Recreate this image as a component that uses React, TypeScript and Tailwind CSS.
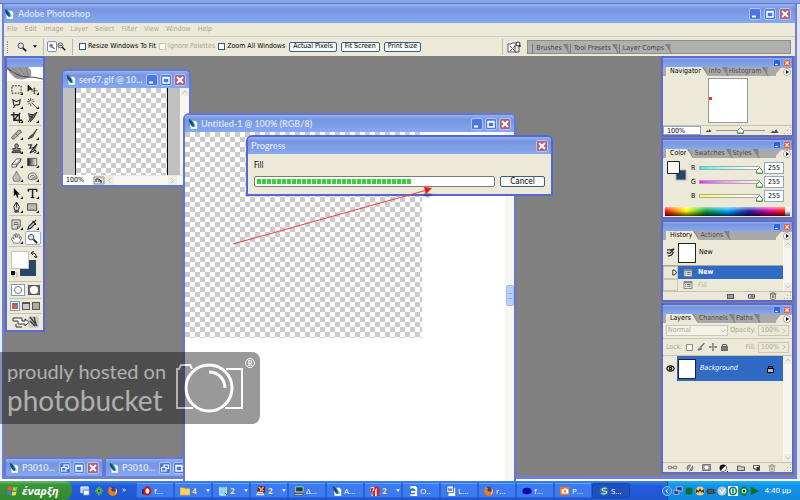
import type { ReactNode } from "react"
import { useState } from "react"
import { ChevronDown, ChevronLeft, ChevronRight, ChevronUp, Eye, Trash2 } from "lucide-react"

const TITLE = "bg-gradient-to-b from-[#93b2f0] via-[#7894de] via-25% to-[#84a9ee]"
const CHECKER = "bg-[repeating-conic-gradient(#ffffff_0_25%,#cbcbcb_0_50%)] bg-[length:10px_10px]"

type WinButtonKind = "min" | "max" | "restore" | "close"

function WinButton({ kind, small, bright }: { kind: WinButtonKind; small?: boolean; bright?: boolean }) {
  const size = small ? "h-2 w-2" : "h-3 w-3"
  const color = kind === "close" ? (bright ? "bg-[#ee5a2c]" : "bg-[#b0617c]") : bright ? "bg-[#2c62dc]" : "bg-[#4a76e8]"
  return (
    <button
      aria-label={kind}
      className={`${size} ${color} flex shrink-0 items-center justify-center rounded-xs border ${small ? "border-[#8ea8ea]" : "border-[#b3c6f4]"}`}
    >
      <svg viewBox="0 0 10 10" className="h-full w-full" fill="none" stroke="#fff" strokeWidth="1.5">
        {kind === "min" && <path d="M2 7.5h4" strokeWidth="2" />}
        {kind === "max" && <path d="M2 2.5h6v5.5h-6zM2 3h6" />}
        {kind === "restore" && <path d="M4 4V2h4.500v3.500H6.500M1.500 4.500h4.500v3.500H1.500z" strokeWidth="1.200" />}
        {kind === "close" && <path d="M2 2l6 6M8 2l-6 6" strokeWidth="1.800" />}
      </svg>
    </button>
  )
}

function PsIcon({ className = "h-3 w-3" }: { className?: string }) {
  return (
    <svg viewBox="0 0 12 12" className={`${className} shrink-0`}>
      <path d="M2 2h7l2 2v8H3z" fill="#fff" stroke="#8ba0c8" strokeWidth=".5" />
      <path d="M1 0c3 0 6 3 7 9l-2 1C3 8 1 4 1 0z" fill="#168b8f" />
      <path d="M1 0c3 2 5 5 7 9l-4-2C2 5 1 3 1 0z" fill="#164399" />
      <path d="M6 3l3 6" stroke="#4ac16b" />
    </svg>
  )
}

function Caret() {
  return (
    <svg viewBox="0 0 6 4" className="h-[3px] w-1 shrink-0">
      <path d="M0 0h6L3 4z" fill="currentColor" />
    </svg>
  )
}

function Magnifier({ sign }: { sign?: string }) {
  return (
    <svg viewBox="0 0 12 12" className="h-full w-full" fill="none">
      <circle cx="4.5" cy="4.5" r="3.300" fill="#dfe3e6" stroke="#333" />
      <path d="M7 7l4 4" stroke="#111" strokeWidth="2" />
      {sign && <path d={sign} stroke="#111" />}
    </svg>
  )
}

const menus = ["File", "Edit", "Image", "Layer", "Select", "Filter", "View", "Window", "Help"]

function OptionCheck({ label, disabled }: { label: string; disabled?: boolean }) {
  return (
    <label className={`flex items-center gap-[2px] ${disabled ? "text-[#aaa797]" : "text-black"}`}>
      <input
        type="checkbox"
        disabled={disabled}
        className="h-[7px] w-[7px] appearance-none border border-[#2c5a8c] bg-white checked:bg-[#2c5a8c] disabled:border-[#cbc8b8]"
      />
      {label}
    </label>
  )
}

function OptionsBar() {
  return (
    <div className="flex h-5 items-center border-t border-[#cfccbd] bg-[#ece9d8] whitespace-nowrap">
      <div className="ml-[3px] h-3 w-[10px] shrink-0 border-l border-dotted border-[#999]" />
      <button aria-label="Zoom tool preset" className="flex items-center gap-[6px]">
        <span className="h-[10px] w-[10px]">
          <Magnifier />
        </span>
        <Caret />
      </button>
      <div className="mx-[3px] ml-[6px] h-4 w-px bg-[#bdb9a8]" />
      <button aria-label="Zoom in" className="h-[11px] w-[10px] rounded-xs border border-[#6f93bb] bg-white p-px">
        <Magnifier sign="M2.500 4.500h4M4.500 2.500v4" />
      </button>
      <button aria-label="Zoom out" className="h-[9px] w-[9px]">
        <Magnifier sign="M2.500 4.500h4" />
      </button>
      <div className="mx-[6px] h-4 w-px bg-[#bdb9a8]" />
      <div className="flex items-center gap-[3px]">
        <OptionCheck label="Resize Windows To Fit" />
        <OptionCheck label="Ignore Palettes" disabled />
        <OptionCheck label="Zoom All Windows" />
      </div>
      <div className="ml-1 flex gap-1">
        {["Actual Pixels", "Fit Screen", "Print Size"].map((t) => (
          <button
            key={t}
            className="flex h-[10px] items-center rounded-xs border border-[#35608f] bg-[#fbfaf5] px-[3px] leading-none"
          >
            {t}
          </button>
        ))}
      </div>
      <div className="flex-1" />
      <div className="flex items-center gap-1">
        <div className="h-4 w-px bg-[#bdb9a8]" />
        <button aria-label="File browser" className="h-3 w-[14px]">
          <svg viewBox="0 0 14 12" className="h-full w-full">
            <path d="M1 3h3l1-1h5v9H1z" fill="#fff" stroke="#555" />
            <path d="M3 5l5 5M8 5L3 10" stroke="#777" />
            <path d="M8 4h4v7H8z" fill="#e8e8e8" stroke="#555" />
            <circle cx="11" cy="3" r="2" fill="#fff" stroke="#222" />
            <path d="M12.500 4.500l1 1" stroke="#000" strokeWidth="1.500" />
          </svg>
        </button>
      </div>
      <div className="mr-1 ml-[6px] flex h-[14px] w-1/3 items-end border border-[#8f8d84] bg-[#afafaf] pl-1 text-[#444]">
        {["Brushes", "Tool Presets", "Layer Comps"].map((t) => (
          <button key={t} className="flex h-[9px] items-center border-l border-[#777] pl-[3px] leading-none">
            {t}
            <TabEdge dim />
          </button>
        ))}
      </div>
    </div>
  )
}

function TabEdge({ dim }: { dim?: boolean }) {
  return (
    <svg viewBox="0 0 10 9" className="h-[9px] w-2 shrink-0" preserveAspectRatio="none">
      {!dim && <path d="M0 0h2l8 9H0z" fill="#ece9d8" />}
      <path d="M2 0h6v7z" fill={dim ? "#858585" : "#a0a0a0"} />
      <path d="M2 0l7 9" stroke="#666" strokeWidth=".8" />
    </svg>
  )
}

function Palette({ tabs, children, className = "" }: { tabs: string[]; children: ReactNode; className?: string }) {
  return (
    <section className={`flex flex-col border-2 border-[#5c6ad0] bg-[#ece9d8] ${className}`}>
      <div className={`flex h-[9px] shrink-0 items-center justify-end gap-[2px] pr-px ${TITLE}`}>
        <WinButton kind="min" small bright />
        <WinButton kind="close" small bright />
      </div>
      <div className="flex h-[9px] shrink-0 items-end bg-[#a9a9a9] pl-[3px] leading-none">
        {tabs.map((t, i) => (
          <button key={t} className={i === 0 ? "flex h-[9px] text-black" : "flex h-[9px] text-[#4d4d4d]"}>
            <span className={i === 0 ? "flex h-full items-center bg-[#ece9d8] pl-1" : "flex h-full items-center"}>{t}</span>
            <TabEdge dim={i > 0} />
          </button>
        ))}
        <div className="flex-1" />
        <svg viewBox="6 0 16 9" className="h-[9px] w-4 shrink-0">
          <path d="M4 9L11 1h11v8z" fill="#ece9d8" />
          <circle cx="17" cy="5" r="3.500" fill="#fff" stroke="#888" strokeWidth=".7" />
          <path d="M16 3l3 2-3 2z" fill="#111" />
        </svg>
      </div>
      {children}
    </section>
  )
}

function Grip() {
  return (
    <svg viewBox="0 0 8 8" className="h-2 w-2 shrink-0" fill="#b5b2a2">
      <path d="M6 0h1v1H6zM6 3h1v1H6zM6 6h1v1H6zM3 3h1v1H3zM3 6h1v1H3zM0 6h1v1H0z" />
    </svg>
  )
}

function Slope({ className }: { className: string }) {
  return (
    <svg viewBox="0 0 10 5" className={className}>
      <path d="M0 5l3-3 2 1 2-3 3 5z" fill="#555" />
    </svg>
  )
}

function Navigator() {
  return (
    <Palette tabs={["Navigator", "Info", "Histogram"]}>
      <div className="flex h-[49px] items-center justify-center">
        <div className="flex h-[45px] w-10 items-center border border-[#999] bg-white">
          <span className="-mt-[5px] h-[3px] w-[3px] bg-[#ff3030]" />
        </div>
      </div>
      <div className="flex h-[10px] items-center border-t border-[#c5c2b2]">
        <input
          aria-label="Zoom"
          defaultValue="100%"
          className="h-[9px] w-[38px] border border-[#8fa9c4] bg-white pl-[3px] leading-none text-black"
        />
        <Slope className="mx-1 h-[3px] w-[7px]" />
        <div className="flex h-px flex-1 items-center justify-center bg-[#999]">
          <Thumb />
        </div>
        <Slope className="mx-1 h-1 w-[11px]" />
        <Grip />
      </div>
    </Palette>
  )
}

function Thumb() {
  return (
    <svg viewBox="0 0 7 7" className="h-[7px] w-[7px] shrink-0">
      <path d="M3.500 .5l3 3v3h-6v-3z" fill="#fff" stroke="#5d8f5d" />
      <path d="M1 6h5" stroke="#35b235" />
    </svg>
  )
}

const channels = [
  { name: "R", track: "from-[#00f4f4]" },
  { name: "G", track: "from-[#ff00ff]" },
  { name: "B", track: "from-[#ffff00]" },
]

function Swatches({ big }: { big?: boolean }) {
  return (
    <svg viewBox={big ? "0 0 30 26" : "0 0 20 20"} className={big ? "h-[26px] w-[30px]" : "h-5 w-5"}>
      {big ? (
        <>
          <path d="M10 9h16v16H10z" fill="#244866" />
          <path d="M1.500 .5h17v17h-17z" fill="#fff" stroke="#c9c6b7" />
          <path d="M22 2c3 0 4 1 4 4M24 5l2 2 1-2M24 0l-3 2 2 2" fill="none" stroke="#222" />
          <path d="M3 22h4v4H3z" fill="#fff" stroke="#777" strokeWidth=".6" />
          <path d="M1 20h4v4H1z" fill="#111" />
        </>
      ) : (
        <>
          <path d="M9 9h10v10H9z" fill="#244866" stroke="#aaa" />
          <path d="M.5 .5h12v12H.5z" fill="#fff" stroke="#222" />
        </>
      )}
    </svg>
  )
}

function ColorPalette() {
  return (
    <Palette tabs={["Color", "Swatches", "Styles"]}>
      <div className="flex h-[49px] gap-1 px-1 pt-[3px]">
        <Swatches />
        <div className="flex-1 text-black">
          {channels.map((c) => (
            <label key={c.name} className="flex h-[14px] items-center">
              <span className="w-2">{c.name}</span>
              <span className={`flex h-1 flex-1 justify-end border border-[#aaa] bg-gradient-to-r to-white ${c.track}`}>
                <span className="-mr-1 h-2 w-[7px]">
                  <Thumb />
                </span>
              </span>
              <input
                aria-label={c.name}
                defaultValue="255"
                className="mr-1 ml-1 h-3 w-5 border border-[#8fa9c4] bg-white pl-[3px]"
              />
            </label>
          ))}
        </div>
      </div>
      <div className="mx-[2px] mb-px h-[9px] bg-[linear-gradient(to_bottom,#fff9,transparent_45%,#000b),linear-gradient(to_right,red,#ff0_17%,#00a040_33%,#0af_50%,#2020a0_67%,#e000a0_83%,#f20_96%,#eee_96%)]" />
    </Palette>
  )
}

function ScrollColumn({ thumb }: { thumb?: boolean }) {
  return (
    <div className="flex w-[9px] shrink-0 flex-col items-center justify-between bg-[#f7f6f0] text-[#b6b4a7]">
      <ChevronUp className="h-2 w-2 bg-[#efede2]" />
      {thumb && (
        <>
          <div className="flex-[7]" />
          <div className="flex h-[21px] w-2 items-center justify-center rounded-xs border border-[#9db8ef] bg-[#bdd0fb]">
            <span className="h-[6px] w-1 border-y border-[#8da9e8]" />
          </div>
          <div className="flex-[9]" />
        </>
      )}
      <ChevronDown className="h-2 w-2 bg-[#efede2]" />
    </div>
  )
}

function History() {
  return (
    <Palette tabs={["History", "Actions"]}>
      <div className="flex h-[51px]">
        <div className="flex flex-1 flex-col text-black">
          <div className="flex h-[26px] items-center border-b border-[#aaa797]">
            <svg viewBox="0 0 10 10" className="mx-[3px] h-[9px] w-[9px]" fill="none" stroke="#333">
              <path d="M1 2h4l3 3-2 3-4 1M1 5l3 1M5 2l4-1M4 6l5-5" strokeWidth="1.500" />
            </svg>
            <span className="mr-[3px] h-5 w-[18px] border border-[#222] bg-white" />
            New
          </div>
          <button className="flex h-[13px] items-center bg-[#316ac5] font-bold text-white">
            <span className="flex h-full w-[15px] items-center justify-end border border-[#c9c6b7] bg-[#ece9d8]">
              <svg viewBox="0 0 6 8" className="h-[7px] w-[5px]">
                <path d="M1 1h2l2.500 3L3 7H1z" fill="#fff" stroke="#000" />
              </svg>
            </span>
            <ListIcon />
            New
          </button>
          <button className="flex h-3 items-center text-[#b8b5a6] italic">
            <span className="h-full w-[15px] border border-[#c9c6b7]" />
            <ListIcon />
            Fill
          </button>
        </div>
        <ScrollColumn />
      </div>
      <div className="flex h-[9px] items-center justify-end gap-[13px] border-t border-[#c5c2b2] text-[#444]">
        <span className="h-[5px] w-[7px] border border-[#555] bg-[#999]" />
        <svg viewBox="0 0 9 7" className="h-[6px] w-[9px]" fill="#ddd" stroke="#333">
          <path d="M1 2h7v4H1z" />
          <circle cx="5" cy="4" r="1" />
        </svg>
        <Trash2 className="-mr-[6px] h-2 w-2" />
        <Grip />
      </div>
    </Palette>
  )
}

function ListIcon() {
  return (
    <svg viewBox="0 0 10 9" className="mx-[5px] h-2 w-[10px]">
      <path d="M.5 .5h9v8h-9z" fill="#eee" stroke="#777" />
      <path d="M1 2h8M2 4h1M4 4h4M2 6h1M4 6h4" stroke="#555" />
    </svg>
  )
}

function Layers() {
  return (
    <Palette tabs={["Layers", "Channels", "Paths"]} className="min-h-0 flex-1">
      <div className="flex h-4 items-center justify-between border-b border-[#cbc8b8] px-[3px] text-[#aaa797]">
        <label className="relative flex h-[11px] w-[62px] items-center border border-[#c9c7ba] bg-[#f4f2e8]">
          <select aria-label="Blend mode" disabled className="w-full appearance-none px-px opacity-100">
            <option>Normal</option>
          </select>
          <ChevronDown className="h-2 w-2 shrink-0" />
        </label>
        <label className="flex items-center gap-[2px]">
          Opacity:
          <Percent label="Opacity" />
        </label>
      </div>
      <div className="flex h-4 items-center justify-between px-[3px] text-[#aaa797]">
        <div className="flex items-center gap-1">
          Lock:
          <svg viewBox="0 0 8 8" className="h-[7px] w-[7px]" fill="#fff" stroke="#777">
            <path d="M.5 .5h7v7h-7z" />
            <path d="M2 2h1v1H2zM5 2h1v1H5zM2 5h1v1H2zM5 5h1v1H5z" stroke="#ccc" strokeWidth=".5" />
          </svg>
          <svg viewBox="0 0 8 8" className="h-2 w-2" fill="none" stroke="#777">
            <path d="M7.500 0L3 5M3.500 4.500L1 7l3-1z" strokeWidth="1.500" />
          </svg>
          <svg viewBox="0 0 8 8" className="h-2 w-2" fill="none" stroke="#666">
            <path d="M4 0v8M0 4h8M3 1h2M3 7h2M1 3v2M7 3v2" />
          </svg>
          <PadLock />
        </div>
        <label className="flex items-center gap-[2px]">
          Fill:
          <Percent label="Fill" />
        </label>
      </div>
      <div className="flex min-h-0 flex-1 border-t border-[#c5c2b2]">
        <div className="flex-1">
          <div className="flex h-[25px] items-center bg-[#316ac5] text-white italic">
            <span className="flex h-full w-[14px] items-center justify-center bg-[#ece9d8] text-black">
              <Eye className="h-[9px] w-[9px] stroke-[3]" />
            </span>
            <span className="mr-1 ml-px h-5 w-[18px] border border-[#222] bg-white" />
            Background
            <span className="flex-1" />
            <span className="pr-[9px]">
              <PadLock dark />
            </span>
          </div>
        </div>
        <ScrollColumn />
      </div>
      <div className="flex h-[10px] shrink-0 items-center justify-between border-t border-[#c5c2b2] pl-1 text-[#777]">
        <svg viewBox="0 0 12 6" className="h-[5px] w-[11px]" fill="none" stroke="#777">
          <path d="M1 1.500h4v3H1zM7 1.500h4v3H7zM4 3h4" />
        </svg>
        <svg viewBox="0 0 8 8" className="h-2 w-2">
          <circle cx="4" cy="4" r="3" fill="#999" stroke="#777" />
          <path d="M2 7l4-6" stroke="#fff" />
        </svg>
        <svg viewBox="0 0 9 7" className="h-[7px] w-[9px]">
          <path d="M.5 .5h8v6h-8z" fill="#999" stroke="#777" />
          <circle cx="4.500" cy="3.500" r="2" fill="#fff" />
        </svg>
        <svg viewBox="0 0 9 8" className="h-2 w-[9px]">
          <circle cx="4" cy="4" r="3.500" fill="#111" />
          <path d="M1.500 6.500a3.500 3.500 0 0 0 5-5z" fill="#fff" stroke="#111" strokeWidth=".5" />
          <path d="M8 7h1v1H8z" />
        </svg>
        <svg viewBox="0 0 8 6" className="h-[6px] w-2">
          <path d="M.5 1h3l1 1h3v3.500h-7z" fill="#ccc" stroke="#555" />
        </svg>
        <svg viewBox="0 0 8 7" className="h-[6px] w-[7px]">
          <path d="M.5 .5h7v6h-4v-2h-3z" fill="#fff" stroke="#333" />
          <path d="M4 2h3v4H4z" fill="#333" />
        </svg>
        <Trash2 className="h-2 w-2" />
        <Grip />
      </div>
    </Palette>
  )
}

function PadLock({ dark }: { dark?: boolean }) {
  return (
    <svg viewBox="0 0 7 8" className="h-2 w-[7px]">
      <path d="M1.500 4V1.500h4V4" fill="none" stroke={dark ? "#000" : "#666"} />
      <path d="M.5 3.500h6v4h-6z" fill={dark ? "#bbb" : "#777"} stroke={dark ? "#000" : "#666"} />
    </svg>
  )
}

function Percent({ label }: { label: string }) {
  return (
    <span className="flex h-[11px] items-center border border-[#c9c7ba]">
      <input aria-label={label} disabled defaultValue="100%" className="w-[21px] pl-[2px]" />
      <ChevronRight className="h-2 w-2" />
    </span>
  )
}

// 12x12 drawings, one row of the toolbox per pair
const tools: { name: string; icon: ReactNode; gap?: boolean }[] = [
  { name: "Marquee", icon: <path d="M1 2h10v8H1z" fill="none" stroke="#222" strokeDasharray="2 1.300" /> },
  { name: "Move", icon: <path d="M1 1v7l2-2h3zM8 4v7M4.500 7.500h7M7 5h2M7 10h2" fill="#222" stroke="#222" strokeWidth=".8" /> },
  { name: "Lasso", icon: <path d="M2 10c2 1 2-2 1-3L2 2l4 2 4-2-1 5-5 1" fill="none" stroke="#333" strokeWidth="1.300" /> },
  { name: "Wand", icon: <path d="M5 5l6 6M4 0v3M4 6v3M0 4h3M6 4h2M1 1l2 2M7 1L5 3M1 7l2-2" fill="none" stroke="#444" /> },
  { name: "Crop", icon: <path d="M3 0v9h9M0 3h9v9M3 9l7-8" fill="none" stroke="#222" strokeWidth="1.400" /> },
  { name: "Slice", icon: <path d="M1 2l6 1 4-3-4 7-4 4M7 3L1 11M2 4l4 2" fill="#777" stroke="#222" /> },
  { name: "Healing", gap: true, icon: <path d="M1 8.500L8 1.500q2-1 3 1t-1 2l-6 6q-2 1-3 0t0-2zM5 5l3 3" fill="#aaa" stroke="#666" /> },
  { name: "Brush", icon: <path d="M11 0L6 6l-2 1-3 4 5-2 1-2z" fill="#555" stroke="#222" strokeWidth=".7" /> },
  { name: "Stamp", icon: <path d="M5 1h2l1 2-1 3h3v2H2V6h3L4 3zM1 9.500h10v1H1z" fill="#999" stroke="#333" /> },
  { name: "History Brush", icon: <path d="M1 2h4L3 6l4-1M11 1L6 7l-3 4 4-2zM8 7l2 2-2 2" fill="none" stroke="#333" strokeWidth="1.200" /> },
  { name: "Eraser", icon: <path d="M1 8l5-6h5l-1 3-5 6H1zM1 8h5l5-6M6 8v3" fill="#fff" stroke="#444" strokeWidth=".9" /> },
  {
    name: "Gradient",
    icon: (
      <>
        <linearGradient id="toolgrad">
          <stop stopColor="#111" />
          <stop offset="1" stopColor="#fff" />
        </linearGradient>
        <path d="M.5 1.500h10v8H.5z" fill="url(#toolgrad)" stroke="#555" />
      </>
    ),
  },
  { name: "Blur", icon: <path d="M6 0C5 4 2 5 2 8a3.500 3.500 0 0 0 8 0C10 5 7 4 6 0z" fill="#bbb" stroke="#777" /> },
  { name: "Sponge", icon: <path d="M1 8c0-4 2-6 5-6s5 3 5 6c-2 2-8 2-10 0zM3 7c2-3 5-3 6 0M5 9c0-2 3-2 5-1" fill="#ddd" stroke="#666" /> },
  { name: "Path Selection", gap: true, icon: <path d="M3 0v9l2-2 2 4 1-1-1-3h3z" fill="#111" /> },
  { name: "Type", icon: <path d="M1.500 4V1.500h9V4M6 1.500v9M4 10.500h4" fill="none" stroke="#222" strokeWidth="1.600" /> },
  { name: "Pen", icon: <path d="M6 0l3 5-1 4H4L3 5zM6 1v5M4 10h4v1H4z" fill="#ddd" stroke="#222" /> },
  { name: "Shape", icon: <path d="M.5 2h10v7H.5z" fill="#bbb" stroke="#444" /> },
  { name: "Notes", gap: true, icon: <path d="M1 1h9v7l-3 3H1zM7 11V8h3M3 4h5M3 6h5" fill="#ddd" stroke="#555" /> },
  { name: "Eyedropper", icon: <path d="M1 11l1-3 5-5 2 2-5 5zM6 2l4 4M8 3l2-2" fill="#ccc" stroke="#222" strokeWidth="1.200" /> },
  { name: "Hand", icon: <path d="M3 11L0 6l2-1 1 2V2h1l1 3V1h1.500v4L8 1.500h1V6l1-2 1.500.500L10 9l-1 2z" fill="#fff" stroke="#555" strokeWidth=".8" /> },
  {
    name: "Zoom",
    icon: (
      <>
        <circle cx="4.500" cy="4.500" r="3" fill="#ddd" stroke="#444" />
        <path d="M7 7l4 4" stroke="#222" strokeWidth="2" />
      </>
    ),
  },
]

function Toolbox() {
  const [active, setActive] = useState("Zoom")
  const rows = tools.filter((_, i) => i % 2 === 0).map((t, i) => [t, tools[i * 2 + 1]])
  return (
    <aside className="ml-px w-10 shrink-0 self-start border-2 border-[#5c6ad0] bg-[#ece9d8]">
      <div className={`h-[9px] ${TITLE}`} />
      <svg viewBox="0 0 36 14" className="block h-[14px] w-full bg-white" preserveAspectRatio="none">
        <path d="M0 0h21c4 3 4 8 2 10-5 3-11 3-15 1C4 8 2 4 0 2z" fill="#9a9a9a" />
        <path d="M0 1c8 6 14 9 22 9 6 0 8 1 14 2" fill="none" stroke="#333" strokeWidth=".9" />
        <path d="M5 0l9 8M12 0l6 9M19 0l2 9M3 5l7 1M8 9l8 0" fill="none" stroke="#777" strokeWidth=".7" />
      </svg>
      <div className="px-[2px] pt-px">
        {rows.map((row) => (
          <div key={row[0].name} className={row[0].gap ? "mt-px flex border-t border-[#c5c2b2] pt-px" : "flex"}>
            {row.map((t) => (
              <button
                key={t.name}
                aria-label={t.name}
                onClick={() => setActive(t.name)}
                className={
                  t.name === active
                    ? "flex h-[14px] w-4 items-center justify-center rounded-xs border border-[#8fb0d4] bg-white"
                    : "flex h-[14px] w-4 items-center justify-center"
                }
              >
                <svg viewBox="0 0 13 12" className="h-[11px] w-3">
                  {t.icon}
                  {t.name !== active && <path d="M13 9v3h-3z" fill="#111" />}
                </svg>
              </button>
            ))}
          </div>
        ))}
        <div className="mt-px flex justify-center border-t border-[#c5c2b2] py-1">
          <Swatches big />
        </div>
        <div className="flex h-[17px] items-center justify-around border-t border-[#c5c2b2]">
          <button aria-label="Standard mode" className="flex h-3 w-[14px] items-center justify-center border border-[#7d9cc2] bg-white">
            <span className="h-2 w-2 rounded-full border border-[#777]" />
          </button>
          <button aria-label="Quick mask" className="flex h-[10px] w-3 items-center justify-center border border-[#555] bg-[#777]">
            <span className="h-2 w-2 rounded-full bg-white" />
          </button>
        </div>
        <div className="flex h-[15px] items-center justify-around border-t border-[#c5c2b2]">
          <button aria-label="Standard screen" className="h-[10px] w-[10px] border border-[#7d9cc2] bg-white">
            <svg viewBox="0 0 8 8" className="h-full w-full">
              <path d="M1 1h6v6H1z" fill="#e2613b" />
              <path d="M1 1h6v2H1zM5 5h2v2H5z" fill="#4a86c4" />
            </svg>
          </button>
          <button aria-label="Full screen with menu" className="h-2 w-2 border border-t-2 border-[#555] bg-[#ccc]" />
          <button aria-label="Full screen" className="h-2 w-2 border border-[#555] bg-[#aaa]" />
        </div>
        <button aria-label="Edit in ImageReady" className="flex h-[17px] w-full items-center border-t border-[#c5c2b2] pl-[3px]">
          <svg viewBox="0 0 27 12" className="h-3 w-[27px]">
            <path d="M1 2h9v3h3V3l4 3-4 4V8H6V5H1z" fill="#fff" stroke="#333" />
            <path d="M4 8v3h6" fill="none" stroke="#333" />
            <path d="M17 1h9v10h-9z" fill="#ccc" stroke="#bbb" />
            <path d="M18 1l7 9M22 1l2 7M18 5l5 5" stroke="#444" strokeWidth="1.500" />
          </svg>
        </button>
      </div>
    </aside>
  )
}

function WindowTitle({ title, buttons, icon }: { title: string; buttons: WinButtonKind[]; icon?: boolean }) {
  return (
    <div
      className={`flex h-[17px] shrink-0 items-center gap-[3px] px-[3px] font-[Lato,sans-serif] text-[9px] font-bold whitespace-nowrap text-[#d5e0fa] ${TITLE}`}
    >
      {icon && <PsIcon className="h-[10px] w-[10px]" />}
      <span className="flex-1">{title}</span>
      <div className="flex gap-[2px]">
        {buttons.map((b) => (
          <WinButton key={b} kind={b} />
        ))}
      </div>
    </div>
  )
}

function GifWindow() {
  return (
    <div className="absolute top-[13px] left-[57px] flex h-[118px] w-[130px] flex-col overflow-hidden rounded-t-md border-2 border-[#6577d6] bg-[#c0c0c0]">
      <WindowTitle icon title="ser67.gif @ 10..." buttons={["min", "max", "close"]} />
      <div className="flex flex-1">
        <div className="flex flex-1 px-3">
          <div className={`flex-1 border-x border-black ${CHECKER}`} />
        </div>
        <ScrollColumn />
      </div>
      <div className="flex h-[10px] items-center bg-[#ece9d8] text-black">
        <input aria-label="Document zoom" defaultValue="100%" className="h-[10px] w-[30px] bg-white pl-[3px]" />
        <svg viewBox="0 0 12 9" className="h-[9px] w-3">
          <path d="M1 1h10v7H1z" fill="#ddd" stroke="#999" />
          <path d="M3 6V3h3l2 2v2M5 5h4" fill="none" stroke="#333" />
        </svg>
        <div className="flex flex-1 items-center justify-between bg-[#f7f6f0] text-[#b6b4a7]">
          <ChevronLeft className="h-[9px] w-[9px] bg-[#efede2]" />
          <ChevronRight className="mr-3 h-[9px] w-[9px] bg-[#efede2]" />
        </div>
      </div>
    </div>
  )
}

function UntitledWindow() {
  return (
    <div className="absolute top-[57px] left-[179px] z-10 flex h-[390px] w-[333px] flex-col overflow-hidden rounded-t-md border-2 border-[#6577d6] bg-white">
      <WindowTitle icon title="Untitled-1 @ 100% (RGB/8)" buttons={["min", "max", "close"]} />
      <div className="flex flex-1">
        <div className="flex-1">
          <div className={`h-[206px] w-[237px] ${CHECKER}`} />
        </div>
        <ScrollColumn thumb />
      </div>
    </div>
  )
}

function ProgressDialog() {
  return (
    <div
      role="dialog"
      aria-label="Progress"
      className="absolute top-[79px] left-[242px] z-20 flex w-[307px] flex-col overflow-hidden rounded-t-md border-2 border-[#5468d4] bg-[#ece9d8] text-[8px] text-black"
    >
      <WindowTitle title="Progress" buttons={["close"]} />
      <div className="px-[6px] pt-[5px] pb-[7px]">
        <p className="h-[17px] leading-[14px]">Fill</p>
        <div className="flex items-center gap-[5px]">
          <div
            role="progressbar"
            aria-valuenow={66}
            className="h-[11px] flex-1 rounded-xs border border-[#7b7b7b] bg-white p-[2px]"
          >
            <div className="h-full w-[66%] bg-[repeating-linear-gradient(to_right,#35d435_0_4px,#fff_4px_5px)]" />
          </div>
          <button className="h-[11px] w-[45px] rounded-xs border border-[#35608f] bg-[#fbfaf5] leading-none">Cancel</button>
        </div>
      </div>
    </div>
  )
}

function Workspace() {
  return (
    <main className="relative flex flex-1 justify-between bg-[#808080]">
      <Toolbox />
      <GifWindow />
      <div className="absolute bottom-0 left-0 flex">
        {["first", "second"].map((k) => (
          <div key={k} className="w-[100px] rounded-t-md border-2 border-b-0 border-[#6577d6] bg-[#6577d6]">
            <WindowTitle icon title="P3010..." buttons={["restore", "max", "close"]} />
          </div>
        ))}
      </div>
      <UntitledWindow />
      <ProgressDialog />
      <svg viewBox="0 0 202 62" className="absolute top-[130px] left-[227px] z-20 h-[62px] w-[202px]">
        <path d="M2 58L196 4" stroke="#f03c3c" />
        <path d="M194 6l8 2-5 4-5-2z" fill="#0004" />
        <path d="M193 1l8 1-6 6z" fill="#f01414" />
      </svg>
      <aside className="mr-px flex w-[133px] shrink-0 flex-col gap-px pb-[2px]">
        <Navigator />
        <ColorPalette />
        <History />
        <Layers />
      </aside>
    </main>
  )
}

function Watermark() {
  return (
    <div className="absolute bottom-[76px] left-0 z-30 flex h-[72px] w-[260px] rounded-r-lg bg-black/40 pl-[7px] font-[Lato,sans-serif] text-white/55">
      <div className="w-[168px] pt-[7px] whitespace-nowrap">
        <p className="text-[20px] leading-6">proudly hosted on</p>
        <p className="text-[28px] leading-[34px]">photobucket</p>
      </div>
      <svg viewBox="0 0 84 72" className="h-[72px] w-[84px]" fill="none">
        <linearGradient id="camera" gradientUnits="userSpaceOnUse" x1="0" x2="84" y1="0" y2="0">
          <stop offset=".12" stopColor="#b2b2b2" />
          <stop offset=".12" stopColor="#fff" />
        </linearGradient>
        <g stroke="url(#camera)" strokeWidth="2">
          <path d="M17 17l-2-4H6l-2 4H2v39h16M51 17h16v39H50" />
          <circle cx="34" cy="36" r="23" strokeWidth="3" />
          <path d="M34 20c9 0 16 7 16 16" strokeWidth="3" />
        </g>
        <circle cx="75" cy="11" r="4.500" stroke="#fff" />
        <text x="75" y="13.500" fill="#fff" fontSize="7" fontWeight="bold" textAnchor="middle">
          R
        </text>
      </svg>
    </div>
  )
}

function Firefox() {
  return (
    <svg viewBox="0 0 12 12" className="h-[10px] w-[10px] shrink-0">
      <circle cx="6" cy="6" r="5" fill="#25469b" />
      <path d="M1 2c2-1 3 0 4 1-2 1-1 4 2 4 2 0 3-2 2-5 3 3 3 9-3 10C1 12-1 7 1 2z" fill="#ee7d16" />
      <path d="M9 2c3 3 2 7-1 9 1-3 2-5 1-9z" fill="#ffc93d" />
    </svg>
  )
}

function TaskIcon({ children }: { children: ReactNode }) {
  return (
    <svg viewBox="0 0 12 12" className="h-[10px] w-[10px] shrink-0">
      {children}
    </svg>
  )
}

const tasks: { icon: ReactNode; text: string; group?: boolean }[] = [
  {
    text: "f...",
    icon: (
      <TaskIcon>
        <path d="M0 4h4v6H0z" fill="#333" />
        <ellipse cx="6.500" cy="6" rx="3.500" ry="4.500" fill="#fff" stroke="#c81818" strokeWidth="2.400" />
      </TaskIcon>
    ),
  },
  { text: "4", group: true, icon: <TaskIcon><path d="M0 2h5l1 1h6v8H0z" fill="#f8d568" stroke="#c28c20" strokeWidth=".6" /></TaskIcon> },
  { text: "2", group: true, icon: <TaskIcon><path d="M2 1h8v10H2z" fill="#8fd4ee" stroke="#e6f5fb" /><path d="M2 1h8M8 8l3 3" stroke="#245c8c" /></TaskIcon> },
  { text: "2", group: true, icon: <TaskIcon><path d="M2 0h9v8H2z" fill="#5b2440" /><path d="M3 1l6 5M9 1L5 6" stroke="#f5a452" strokeWidth="1.800" /><path d="M2 7h6l2 4H0z" fill="#e8e8e8" /><path d="M2 9h6" stroke="#777" /></TaskIcon> },
  { text: "Δ...", icon: <TaskIcon><path d="M2 1h9v6H2z" fill="#17452d" stroke="#ccc" /><path d="M1 9h10v2H0z" fill="#ddd" stroke="#444" /></TaskIcon> },
  { text: "A...", icon: <PsIcon className="h-[10px] w-[10px]" /> },
  { text: "2", group: true, icon: <TaskIcon><path d="M4 1h7v11H4z" fill="#d32020" /><path d="M0 2l5-1v4L3 7v5H2V6H0zM6 5l2-3v10H6z" fill="#fff" /><path d="M0 3l4-1-1 4v5L1 6z" fill="#d32020" /></TaskIcon> },
  { text: "O..", icon: <TaskIcon><path d="M3 0h6l2 2v10H3z" fill="#fff" /><path d="M8 8a3 3 0 1 1 0-3H3" fill="none" stroke="#286cc0" strokeWidth="1.600" /></TaskIcon> },
  { text: "L...", icon: <TaskIcon><path d="M3 2h8v10H3z" fill="#fff" /><path d="M1 0h8v8H1z" fill="#fff" stroke="#2b5eb0" /><path d="M2.500 2l1.200 4L5 3l1.300 3 1.200-4" fill="none" stroke="#2b5eb0" /></TaskIcon> },
  { text: "r...", icon: <Firefox /> },
  { text: "f...", icon: <TaskIcon><ellipse cx="6" cy="6" rx="5.500" ry="4" fill="#0808a8" /></TaskIcon> },
  { text: "P...", icon: <TaskIcon><path d="M0 1h11v10H0z" fill="#e87724" /><path d="M2 4h2l1-1h3l1 1h1v5H2z" fill="#fff" /><circle cx="6" cy="6.500" r="2" fill="#e87724" stroke="#fff" /></TaskIcon> },
  { text: "S...", icon: <TaskIcon><circle cx="6" cy="6" r="5.500" fill="#37738f" /><path d="M9 3C6 2 3 3 4 5s4 0 5 2-3 3-6 2" fill="none" stroke="#c9e7f1" strokeWidth="1.300" /></TaskIcon> },
]

function Taskbar() {
  return (
    <footer className="relative z-20 flex h-[19px] items-center bg-gradient-to-b from-[#3c83ef] via-[#245bdb] via-25% to-[#2056cf] font-['Open_Sans','DejaVu_Sans',sans-serif] text-[8px] text-white">
      <button className="flex h-full w-[72px] shrink-0 items-center gap-1 rounded-r-lg bg-gradient-to-b from-[#6abb68] via-[#3a963a] via-20% to-[#33872f] pl-[7px] text-[11px] leading-none font-bold italic">
        <svg viewBox="0 0 12 12" className="h-[11px] w-[11px]">
          <path d="M1 2c2-1 3-1 4.500 0L5 6C3 5 2 5 0 6z" fill="#f0592a" />
          <path d="M6.500 2c2 1 3 1 5 0l-1 4c-2 1-3 1-4.500 0z" fill="#8fd04c" />
          <path d="M0 7c2-1 3-1 4.500 0L4 11c-2-1-3-1-4 0z" fill="#3f7cf0" />
          <path d="M6 7c1 1 3 1 4.500 0l-1 4c-2 1-3 1-4.500 0z" fill="#fbd045" />
        </svg>
        έναρξη
      </button>
      <div className="flex w-[64px] shrink-0 items-center gap-1 pl-2">
        <TaskIcon>
          <path d="M1 1h9v7H1z" fill="#bcd8f3" stroke="#e8f2fc" />
          <path d="M4 5h7v6H4z" fill="#fff" stroke="#4b7db8" />
        </TaskIcon>
        <TaskIcon>
          <path d="M6 1v10M1 6h10M3 3l6 6M9 3l-6 6" stroke="#3ecb3e" strokeWidth="2" />
          <circle cx="6" cy="6" r="1.500" fill="#a7261c" />
        </TaskIcon>
        <Firefox />
        <span className="pb-1">»</span>
      </div>
      <div className="flex min-w-0 flex-1">
        {tasks.map((t, i) => (
          <button
            key={i}
            className={
              i === tasks.length - 1
                ? "flex h-[15px] w-[38px] items-center gap-[2px] rounded-xs border border-[#1a46ab] bg-[#1f50bd] pl-[6px]"
                : "flex h-[15px] w-[38px] items-center gap-[2px] rounded-xs border border-[#2861d8] border-t-[#6da0fa] bg-[#3c7bf0] pl-[5px]"
            }
          >
            {t.icon}
            <span className={t.group ? "flex flex-1 items-center justify-between pr-px font-bold text-[#ffd98c]" : ""}>
              {t.text}
              {t.group && (
                <span className="text-white">
                  <Caret />
                </span>
              )}
            </span>
          </button>
        ))}
      </div>
      <div className="flex h-full shrink-0 items-center gap-px border-l border-[#0b4a9c] bg-gradient-to-b from-[#1cb0f8] via-[#1293ea] via-25% to-[#1189dd] pr-[9px]">
        <button aria-label="Show hidden icons" className="-ml-[6px] flex h-[10px] w-[10px] items-center justify-center rounded-full border border-[#8fc6f7] bg-[#2b7be4]">
          <ChevronLeft className="h-2 w-2 stroke-[3]" />
        </button>
        <TaskIcon><path d="M4 1h7v5H4zM1 5h6v5H1z" fill="#26397e" stroke="#b8c6e8" /></TaskIcon>
        <TaskIcon><path d="M2 2h8v8H2z" fill="#087022" /></TaskIcon>
        <TaskIcon><circle cx="6" cy="6" r="5.500" fill="#f5c86e" /><path d="M2 8V5l2 2 2-3 2 3 2-2v3" fill="none" stroke="#333" strokeWidth="1.500" /></TaskIcon>
        <TaskIcon><path d="M2 4h7v5H2zM9 5h3M9 8h3M0 6.500h2" fill="#555" stroke="#333" /></TaskIcon>
        <TaskIcon><circle cx="6" cy="6" r="5.500" fill="#bfc8cf" /><path d="M3 5l3 4 4-6" fill="none" stroke="#fff" strokeWidth="1.500" /></TaskIcon>
        <TaskIcon><path d="M0 0h12v12H0z" fill="#fff" /><ellipse cx="6" cy="6" rx="4" ry="4.500" fill="none" stroke="#078168" strokeWidth="2" /><path d="M6 3v6" stroke="#078168" strokeWidth="2" /></TaskIcon>
        <TaskIcon><path d="M0 6l3-4 3-2 3 2 3 4-3 4-3 2-3-2z" fill="#0c7d20" /><circle cx="6" cy="6" r="3" fill="#cbe8c7" /><circle cx="6" cy="6" r="1.500" fill="#111" /></TaskIcon>
        <TaskIcon><path d="M1 1l10 5-10 5z" fill="#087022" /></TaskIcon>
        <time className="ml-1 font-[Roboto,sans-serif] whitespace-nowrap">4:40 μμ</time>
      </div>
    </footer>
  )
}

export default function App() {
  return (
    <div className="relative flex h-screen w-full flex-col overflow-hidden bg-white font-['DejaVu_Sans_Condensed','DejaVu_Sans',sans-serif] text-[7px]">
      <div className="h-1 shrink-0 border-b border-[#6079cf] bg-[#86a4e8]" />
      <div className="flex min-h-0 flex-1 border-r-3 border-l-2 border-r-[#e3e3ee] border-l-[#e8eefb]">
        <div className="flex min-w-0 flex-1 flex-col border-x-2 border-b-3 border-[#6e80dc]">
          <header className={`flex h-[19px] shrink-0 items-center gap-1 pr-1 ${TITLE}`}>
            <PsIcon className="h-[10px] w-[10px]" />
            <h1 className="flex-1 font-[Lato,sans-serif] text-[9px] font-bold text-[#d5e0fa]">Adobe Photoshop</h1>
            <div className="flex gap-[3px]">
              <WinButton kind="min" />
              <WinButton kind="max" />
              <WinButton kind="close" />
            </div>
          </header>
          <nav className="flex h-[13px] shrink-0 items-center gap-[7px] bg-[#ece9d8] pl-[3px] text-[#aaa797]">
            {menus.map((m) => (
              <button key={m}>{m}</button>
            ))}
          </nav>
          <OptionsBar />
          <Workspace />
        </div>
      </div>
      <div className="h-[2px] shrink-0" />
      <Taskbar />
      <Watermark />
    </div>
  )
}
